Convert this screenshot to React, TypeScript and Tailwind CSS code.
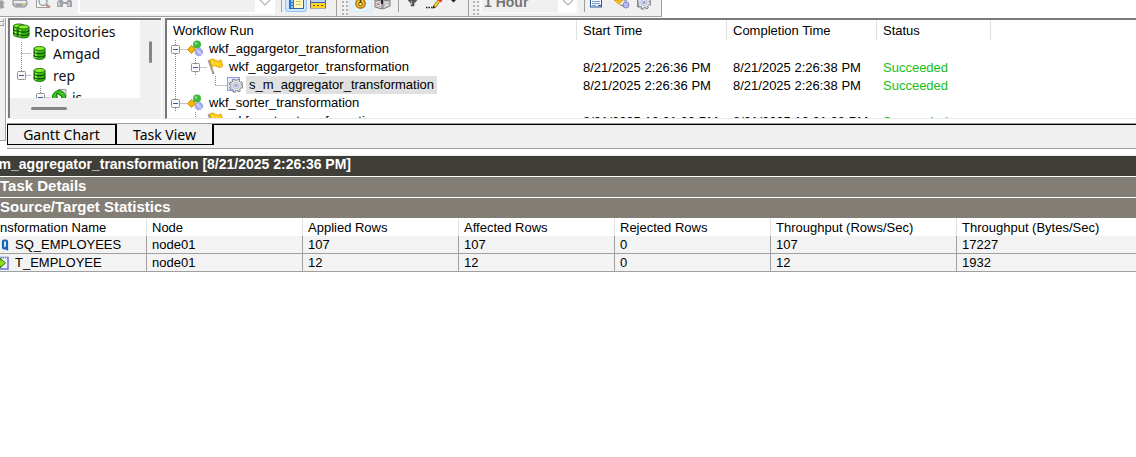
import React from "react";

type Guide = "toggle" | "line" | "elbow" | "tee" | "blank";

function GuideCell({ kind, tall }: { kind: Guide; tall?: boolean }) {
  const h = tall ? 22 : 18;
  const w = tall ? 19 : 20;
  const cx = tall ? 9.5 : 8.5;
  const cy = h / 2 + (tall ? 0.5 : 0.5);
  const art = (
    <svg width={w} height={h} viewBox={`0 0 ${w} ${h}`} className="block" aria-hidden="true">
      <g stroke="#8a8a8a" strokeDasharray="1 1" fill="none">
        {kind !== "blank" && <path d={`M${cx} 0V${kind === "elbow" || (tall && kind === "toggle") ? cy : h}`} />}
        {kind !== "blank" && kind !== "line" && <path d={`M${cx} ${cy}H${w}`} />}
      </g>
      {kind === "toggle" && (
        <g>
          <rect x={cx - 4} y={cy - 4} width="8" height="8" rx="1" fill="#fafafa" stroke="#919191" />
          <path d={`M${cx - 2.5} ${cy}h5`} stroke="#3c58a8" />
        </g>
      )}
    </svg>
  );
  if (kind === "toggle") {
    return (
      <button type="button" aria-label="Collapse" className="block shrink-0">
        {art}
      </button>
    );
  }
  return <span className="block shrink-0">{art}</span>;
}

function WorkflowIcon() {
  return (
    <svg width="16" height="18" viewBox="0 0 16 18" className="block shrink-0" aria-hidden="true">
      <circle cx="10" cy="4.5" r="4" fill="#3db83d" />
      <circle cx="9" cy="3.5" r="1.6" fill="#7bdc74" />
      <path d="M4.5 5.5L8.5 9.5L4.5 13.5L.5 9.5Z" fill="#f5b800" stroke="#c98c00" />
      <circle cx="11.8" cy="12" r="3.8" fill="#a9aef0" stroke="#8f95dc" strokeDasharray="2 1" />
      <path d="M10 10l4 4" stroke="#d5d8ff" strokeWidth="1.4" />
    </svg>
  );
}

function FlagIcon() {
  return (
    <svg width="16" height="18" viewBox="0 0 16 18" className="block shrink-0" aria-hidden="true">
      <path d="M1.5 2L6.5 16" stroke="#77716a" strokeWidth="1.8" />
      <path d="M1 2L6 15" stroke="#d0ccc4" strokeWidth="0.7" />
      <path d="M2.5 2.2C5 .2 7 1 8.5 2.2C10.5 3.6 12 3.2 14 1.8L15.8 8C13.5 10 11.5 9.6 10 8.5C8 7.2 6.5 7.6 5 9.4Z" fill="#ffcc14" stroke="#d99a00" strokeWidth="0.8" />
      <path d="M5 3.5l1.5 3M9.5 4.5l1.5 3" stroke="#ffe878" />
    </svg>
  );
}

function GearShape() {
  return (
    <g>
      <circle cx="9" cy="9.5" r="5.6" fill="none" stroke="#66696e" strokeWidth="3" strokeDasharray="2.6 1.8" />
      <circle cx="9" cy="9.5" r="5.4" fill="#e6e7ea" stroke="#7d8085" strokeWidth="0.9" />
      <circle cx="9" cy="9.5" r="5.5" fill="none" stroke="#e6e7ea" strokeWidth="1.6" strokeDasharray="1.5 2.82" strokeDashoffset="-0.5" />
      <circle cx="9" cy="9.5" r="3" fill="#f4f5fa" stroke="#a4a8b4" strokeWidth="0.8" />
      <circle cx="9" cy="9.5" r="1.8" fill="#9da2ea" />
    </g>
  );
}

function SessionIcon() {
  return (
    <svg width="16" height="18" viewBox="0 0 16 18" className="block shrink-0" aria-hidden="true">
      <rect x="0.5" y="1.5" width="12" height="13" fill="#e4ecff" stroke="#8f9cf0" />
      <GearShape />
    </svg>
  );
}

function Cylinder({ x = 0, y = 0 }: { x?: number; y?: number }) {
  return (
    <g transform={`translate(${x} ${y})`}>
      <path d="M0 2.5V11C0 14.3 11 14.3 11 11V2.5Z" fill="#35b80c" stroke="#12650a" strokeWidth="0.9" />
      <path d="M1.8 5v7" stroke="#a8f24a" strokeWidth="1.8" />
      <ellipse cx="5.5" cy="2.5" rx="5.5" ry="2" fill="#8cf02a" stroke="#12650a" strokeWidth="0.9" />
      <path d="M0 5.5C0 8.3 11 8.3 11 5.5M0 8.8C0 11.6 11 11.6 11 8.8" fill="none" stroke="#0d4a08" strokeWidth="1.1" />
    </g>
  );
}

function RepoIcon() {
  return (
    <svg width="13" height="16" viewBox="0 0 13 16" className="block shrink-0" aria-hidden="true">
      <Cylinder x={1} y={1} />
    </svg>
  );
}

function ReposIcon() {
  return (
    <svg width="17" height="16" viewBox="0 0 17 16" className="block shrink-0" aria-hidden="true">
      <Cylinder x={0.5} y={0.5} />
      <Cylinder x={5} y={1.5} />
    </svg>
  );
}

function ServiceIcon() {
  return (
    <svg width="15" height="16" viewBox="0 0 15 16" className="block shrink-0" aria-hidden="true">
      <path d="M6 .5h8v8" fill="#e2e2f0" stroke="#9a9a9a" />
      <circle cx="7" cy="8" r="6.5" fill="#3cc41c" stroke="#16800c" />
      <path d="M5 4l5.500 4L5 12Z" fill="#f4fff0" stroke="#0b5a08" />
    </svg>
  );
}

function TreeRow({ guides, icon, label }: { guides: Guide[]; icon: React.ReactNode; label: string }) {
  return (
    <li className="flex h-[22px] items-center pl-0.5">
      {guides.map((g, i) => (
        <GuideCell key={i} kind={g} tall />
      ))}
      <span className="ml-0.5 flex w-5 shrink-0">{icon}</span>
      <span className="whitespace-nowrap">{label}</span>
    </li>
  );
}

function RepositoryPanel() {
  return (
    <nav
      aria-label="Repositories"
      className="grid h-[100px] w-[153px] shrink-0 grid-cols-[1fr_21px] grid-rows-[1fr_20px] border-l-2 border-t-2 border-l-[#7a7a7a] border-t-[#7a7a7a] bg-[#f0f0f0]"
    >
      <ul className="overflow-hidden bg-white font-['Noto_Sans','Open_Sans',sans-serif] text-[14px] text-[#111]">
        <li className="flex h-[22px] items-center pl-[3px]">
          <span className="flex w-[21px] shrink-0">
            <ReposIcon />
          </span>
          <span>Repositories</span>
        </li>
        <TreeRow guides={["tee"]} icon={<RepoIcon />} label="Amgad" />
        <TreeRow guides={["toggle"]} icon={<RepoIcon />} label="rep" />
        <TreeRow guides={["blank", "toggle"]} icon={<ServiceIcon />} label="is" />
      </ul>
      <div className="flex justify-center pt-[21px]">
        <div className="h-[22px] w-[3px] rounded bg-[#858585]" />
      </div>
      <div className="flex items-center pl-[21px]">
        <div className="h-[3px] w-9 rounded bg-[#858585]" />
      </div>
    </nav>
  );
}

type Run = { guides: Guide[]; icon: React.ReactNode; name: string; start: string; end: string; status: string; selected?: boolean };

const runs: Run[] = [
  { guides: ["toggle"], icon: <WorkflowIcon />, name: "wkf_aggargetor_transformation", start: "", end: "", status: "" },
  { guides: ["line", "toggle"], icon: <FlagIcon />, name: "wkf_aggargetor_transformation", start: "8/21/2025 2:26:36 PM", end: "8/21/2025 2:26:38 PM", status: "Succeeded" },
  { guides: ["line", "blank", "elbow"], icon: <SessionIcon />, name: "s_m_aggregator_transformation", start: "8/21/2025 2:26:36 PM", end: "8/21/2025 2:26:38 PM", status: "Succeeded", selected: true },
  { guides: ["toggle"], icon: <WorkflowIcon />, name: "wkf_sorter_transformation", start: "", end: "", status: "" },
  { guides: ["blank", "line"], icon: <FlagIcon />, name: "wkf_sorter_transformation", start: "8/21/2025 12:21:22 PM", end: "8/21/2025 12:21:38 PM", status: "Succeeded" },
];

function WorkflowRuns() {
  return (
    <section className="h-[101px] min-w-0 flex-1 overflow-hidden border-b border-l-2 border-t-2 border-b-[#e8e8e8] border-l-[#7a7a7a] border-t-[#7a7a7a] bg-white">
      <table className="w-full table-fixed border-separate border-spacing-0 text-left">
        <colgroup>
          <col className="w-[410px]" />
          <col className="w-[150px]" />
          <col className="w-[150px]" />
          <col className="w-[114px]" />
          <col />
        </colgroup>
        <thead>
          <tr className="h-5">
            {["Workflow Run", "Start Time", "Completion Time", "Status"].map((h) => (
              <th key={h} scope="col" className="border-r border-[#e0e0e0] p-0 pl-1.5 font-normal">
                {h}
              </th>
            ))}
            <td />
          </tr>
        </thead>
        <tbody>
          {runs.map((r, i) => (
            <tr key={i} className="h-[18px]">
              <td className="p-0">
                <div className="flex h-[18px] items-center">
                  {r.guides.map((g, j) => (
                    <GuideCell key={j} kind={g} />
                  ))}
                  {r.icon}
                  <span className={r.selected ? "ml-[3px] bg-[#e0e0e0] px-[3px] leading-[18px]" : "ml-[3px] px-[3px] leading-[18px]"}>{r.name}</span>
                </div>
              </td>
              <td className="p-0 pl-1.5">{r.start}</td>
              <td className="p-0 pl-1.5">{r.end}</td>
              <td className="p-0 pl-1.5 text-[#17be17]">{r.status}</td>
              <td />
            </tr>
          ))}
        </tbody>
      </table>
    </section>
  );
}

function Gripper() {
  return (
    <svg width="8" height="16" viewBox="0 0 8 16" className="block shrink-0" aria-hidden="true">
      {[1, 5, 9, 13].map((y) => (
        <g key={y} fill="#b4b4b4">
          <rect x="1" y={y} width="2" height="2" />
          <rect x="5" y={y} width="2" height="2" />
        </g>
      ))}
    </svg>
  );
}

function ToolButton({ label, className, width, children }: { label: string; className: string; width: number; children: React.ReactNode }) {
  return (
    <button type="button" aria-label={label} className={className}>
      <svg width={width} height="11" viewBox={`0 0 ${width} 11`} className="block" aria-hidden="true">
        {children}
      </svg>
    </button>
  );
}

function ToolSelect({ label, value, className }: { label: string; value: string; className: string }) {
  return (
    <div className={className}>
      <select
        aria-label={label}
        defaultValue={value}
        className="-mt-2 h-5 min-w-0 flex-1 appearance-none bg-[#f0f0f0] pl-0.5 text-[14px] font-bold leading-4 text-[#777]"
      >
        <option value={value}>{value}</option>
      </select>
      <svg width="18" height="12" viewBox="0 0 18 12" className="block shrink-0 bg-white" aria-hidden="true">
        <path d="M5 0l5 5l5-5" fill="none" stroke="#b2b2b2" strokeWidth="1.2" />
      </svg>
    </div>
  );
}

function Toolbar() {
  return (
    <div className="flex h-[18px] items-start overflow-hidden bg-white">
      <div role="toolbar" aria-label="Standard" className="flex h-[17px] items-start border-b border-r border-[#a0a0a0] bg-[#f0f0f0]">
        <ToolButton label="Stop" className="w-3" width={5}>
          <path d="M0 1h3v7H0M3 3h1.500M3 7h1.500" fill="#a0a0a0" stroke="#a0a0a0" />
        </ToolButton>
        <ToolButton label="Print" className="w-6" width={17}>
          <path d="M1 0h13l1 2v3l-2 2H3L1 5Z" fill="#b9bcc2" stroke="#8f9298" />
          <path d="M2 2h12" stroke="#eceef2" strokeWidth="2" />
          <path d="M4 5h6" stroke="#888" />
          <rect x="10" y="3" width="2" height="2" fill="#d8d64a" />
        </ToolButton>
        <ToolButton label="Print preview" className="w-[21px]" width={16}>
          <path d="M.5 0V7.500H13" fill="#f8f8f8" stroke="#9c9c9c" />
          <circle cx="7" cy="1.500" r="4" fill="#eaf3fa" stroke="#999" strokeWidth="1.3" />
          <path d="M10 4.500l4 3" stroke="#bd9080" strokeWidth="2.2" />
        </ToolButton>
        <ToolButton label="Find" className="w-[21px]" width={16}>
          <path d="M0 7V2l2-2h3l2 2h2l2-2h3l1 2v5H10V4H6v3Z" fill="#9fa2a8" />
          <path d="M2 2v4M12 2v4" stroke="#d6d8dc" strokeWidth="1.5" />
        </ToolButton>
        <ToolSelect label="Filter" value="" className="flex h-[14px] w-[197px] border-x-2 border-b-2 border-white" />
        <span className="ml-1.5 h-3 w-1 border-l border-[#a0a0a0]" />
        <ToolButton label="Show navigator" className="flex h-3 w-[22px] justify-center rounded-b border-x border-b border-[#8fc5f5] bg-[#cfe7fc]" width={15}>
          <rect x="0.5" y="-5" width="14" height="13.5" fill="#fff8c8" stroke="#3565a8" />
          <rect x="1" y="-4" width="4" height="12" fill="#2f78dc" />
          <path d="M2 1h2M2 4h2M2 7h2" stroke="#fff" />
          <path d="M7 1.500h5M7 4.500h5" stroke="#e0c04a" />
        </ToolButton>
        <ToolButton label="Show output" className="ml-[3px] w-[26px]" width={16}>
          <rect x="0.5" y="-5" width="15" height="13" fill="#2e66b8" stroke="#68686c" />
          <rect x="1" y="0" width="14" height="2" fill="#bcd4f0" />
          <rect x="1" y="3" width="14" height="5" fill="#ffd42a" />
          <path d="M3 5.500h2M7 5.500h2M11 5.500h2" stroke="#765a00" />
        </ToolButton>
      </div>
      <div role="toolbar" aria-label="View" className="flex h-[17px] items-start border-b border-r border-[#a0a0a0] bg-[#f0f0f0] pl-1">
        <Gripper />
        <ToolButton label="Lock" className="flex h-3 w-[23px] justify-center border-x border-b border-[#d3e9fc] bg-[#e6f3fd]" width={13}>
          <circle cx="6.5" cy="3.5" r="4.7" fill="#f4bd24" stroke="#ad7300" strokeWidth="1.3" />
          <circle cx="6.5" cy="4" r="1.8" fill="#fff3bd" stroke="#7e5600" />
          <path d="M6.500 0v3" stroke="#51401c" strokeWidth="1.5" />
        </ToolButton>
        <ToolButton label="Cascade" className="ml-0.5 w-6" width={17}>
          <path d="M1 0v7l7 2V1ZM9 1v8l7-3V0Z" fill="#d9d9dc" stroke="#77777b" />
          <path d="M3 1v5M5.500 2v5M11 3v4M14 1v4" stroke="#98989c" strokeDasharray="1 1" />
          <path d="M8 0v4" stroke="#222" strokeWidth="2" />
          <path d="M3 4h2" stroke="#e04a3a" />
        </ToolButton>
        <span className="h-3 w-2.5 border-l border-[#a0a0a0]" />
        <ToolButton label="Filter tasks" className="w-[18px]" width={9}>
          <path d="M0 0h9L6 3.500V6H3V3.500Z" fill="#5c5c60" stroke="#44444a" strokeWidth="0.6" />
          <path d="M3.500 1v4" stroke="#aaa" />
        </ToolButton>
        <ToolButton label="Edit" className="w-[25px]" width={18}>
          <path d="M0 7.500h8" stroke="#222" strokeDasharray="1.5 1" strokeWidth="1.3" />
          <path d="M7.500 6L12 0h3L10 7L7 8Z" fill="#ffd82c" stroke="#7b6418" strokeWidth="0.8" />
          <path d="M12 0l3 2.500L16.500 0" fill="#e23a2c" />
          <path d="M6.500 8.500l1-3l2 2Z" fill="#222" />
        </ToolButton>
        <ToolButton label="More" className="w-[17px]" width={5}>
          <path d="M0 0h5L2.500 2.500Z" fill="#222" />
        </ToolButton>
      </div>
      <div role="toolbar" aria-label="Time" className="flex h-[17px] items-start border-b border-r border-[#a0a0a0] bg-[#f0f0f0] pl-[3px]">
        <Gripper />
        <ToolSelect label="Time scale" value="1 Hour" className="flex h-[14px] w-[98px] border-x-2 border-b-2 border-[#f8f8f8]" />
        <span className="ml-1.5 h-3 w-1.5 border-l border-[#a0a0a0]" />
        <ToolButton label="Properties" className="w-6" width={13}>
          <rect x="0.5" y="-5" width="11" height="12" fill="#f4f8ff" stroke="#2d5696" />
          <path d="M2 1.500h8M2 3.500h8M2 5.500h4" stroke="#7a9ed0" />
          <path d="M8 5.500h3" stroke="#2d5696" />
        </ToolButton>
        <ToolButton label="Go to workflow" className="w-[22px]" width={17}>
          <path d="M0 0h9L5 4.500Z" fill="#f5c016" stroke="#bb8910" strokeWidth="0.5" />
          <circle cx="12" cy="5" r="3" fill="#b5baf0" stroke="#8289cc" />
          <circle cx="11.5" cy="0" r="2" fill="#a8a8c4" />
          <path d="M6 5l4 1" stroke="#777" />
        </ToolButton>
        <ToolButton label="Go to task" className="w-[25px]" width={17}>
          <path d="M1.500 0v7H6" stroke="#7f90dc" fill="#e9edff" />
          <g transform="translate(-1 -7)">
            <GearShape />
          </g>
        </ToolButton>
      </div>
    </div>
  );
}

const columns = ["Transformation Name", "Node", "Applied Rows", "Affected Rows", "Rejected Rows", "Throughput (Rows/Sec)", "Throughput (Bytes/Sec)"];

const stats = [
  ["SQ_EMPLOYEES", "node01", "107", "107", "0", "107", "17227"],
  ["T_EMPLOYEE", "node01", "12", "12", "0", "12", "1932"],
];

function SourceIcon() {
  return (
    <svg width="16" height="14" viewBox="0 0 16 14" className="block shrink-0" aria-hidden="true">
      <path d="M6.500 2.500H2v4h4v4H1.500" fill="none" stroke="#1464c0" strokeWidth="2" />
      <rect x="10" y="2.5" width="4" height="8" rx="1" fill="none" stroke="#1464c0" strokeWidth="2.2" />
      <path d="M12 9l3 3" stroke="#1464c0" strokeWidth="2" />
    </svg>
  );
}

function TargetIcon() {
  return (
    <svg width="16" height="14" viewBox="0 0 16 14" className="block shrink-0" aria-hidden="true">
      <rect x="2" y="1.5" width="13" height="11.5" fill="#eef0ff" stroke="#6c70d4" strokeWidth="1.5" />
      <path d="M3 2h11" stroke="#fff" strokeDasharray="1 1" />
      <path d="M2 4.500h5V2L12.500 7L7 12V9.500H2Z" fill="#8fd81c" stroke="#237a10" />
    </svg>
  );
}

function Statistics() {
  return (
    <section className="overflow-hidden">
      <div className="-ml-6">
        <table className="w-full table-fixed border-separate border-spacing-0 text-left">
          <colgroup>
            <col className="w-[171px]" />
            <col className="w-[156px]" />
            <col className="w-[156px]" />
            <col className="w-[156px]" />
            <col className="w-[156px]" />
            <col className="w-[186px]" />
            <col />
          </colgroup>
          <thead>
            <tr className="h-[18px]">
              {columns.map((c) => (
                <th key={c} scope="col" className="whitespace-nowrap border-r border-[#e0e0e0] p-0 pl-[5px] font-normal last:border-r-0">
                  {c}
                </th>
              ))}
            </tr>
          </thead>
          <tbody>
            {stats.map((row, i) => (
              <tr key={row[0]} className="h-[18px] bg-[#f3f3f3]">
                {row.map((v, j) => (
                  <td key={j} className="border-b border-r border-[#a0a0a0] p-0 pl-[5px] leading-[17px] last:border-r-0">
                    {j === 0 ? (
                      <span className="flex items-center gap-1.5 pl-3">
                        {i === 0 ? <SourceIcon /> : <TargetIcon />}
                        {v}
                      </span>
                    ) : (
                      v
                    )}
                  </td>
                ))}
              </tr>
            ))}
          </tbody>
        </table>
      </div>
    </section>
  );
}

export default function App() {
  return (
    <main className="min-h-screen overflow-hidden bg-white font-['Liberation_Sans',Arial,sans-serif] text-[13px] leading-[17px] text-black">
      <Toolbar />
      <div className="flex">
        <div className="mb-2 flex w-1.5 shrink-0 flex-col border-b border-r border-[#a0a0a0] bg-[#f0f0f0]">
          <span className="mt-px h-[3px] w-1 border-b border-r border-[#a0a0a0]" />
          <span className="mt-px h-[3px] w-1 border-b border-r border-[#a0a0a0]" />
        </div>
        <div className="min-w-0 flex-1 pl-px">
          <div className="flex bg-[#f0f0f0] pl-px">
            <RepositoryPanel />
            <div className="w-1 shrink-0 border-l border-white" />
            <WorkflowRuns />
          </div>
          <div className="h-[5px] border-b border-[#a0a0a0] bg-white" />
          <div className="flex h-[25px] items-start border-b border-[#a0a0a0] bg-[#f0f0f0] font-['Noto_Sans','Open_Sans',sans-serif] text-[14px]">
            <div role="tablist" className="flex">
              <button type="button" role="tab" aria-selected="true" className="flex h-[21px] w-[110px] items-center justify-center border-b border-l border-r-2 border-t border-black">
                Gantt Chart
              </button>
              <button type="button" role="tab" aria-selected="false" className="flex h-[21px] w-[97px] items-center justify-center border-b border-r-2 border-black">
                Task View
              </button>
            </div>
            <div className="h-px flex-1 bg-black" />
          </div>
        </div>
      </div>
      <div className="mt-1.5 border-t border-[#f0f0f0] font-bold text-white">
        <h1 className="flex h-5 justify-between overflow-hidden bg-[#403e39] text-[14px]">
          <span className="-ml-[17px] whitespace-nowrap">s_m_aggregator_transformation [8/21/2025 2:26:36 PM]</span>
        </h1>
        <h2 className="mt-px h-5 bg-[#827e76] text-[15px]">Task Details</h2>
        <h2 className="mt-px h-5 bg-[#827e76] text-[15px]">Source/Target Statistics</h2>
      </div>
      <Statistics />
    </main>
  );
}
